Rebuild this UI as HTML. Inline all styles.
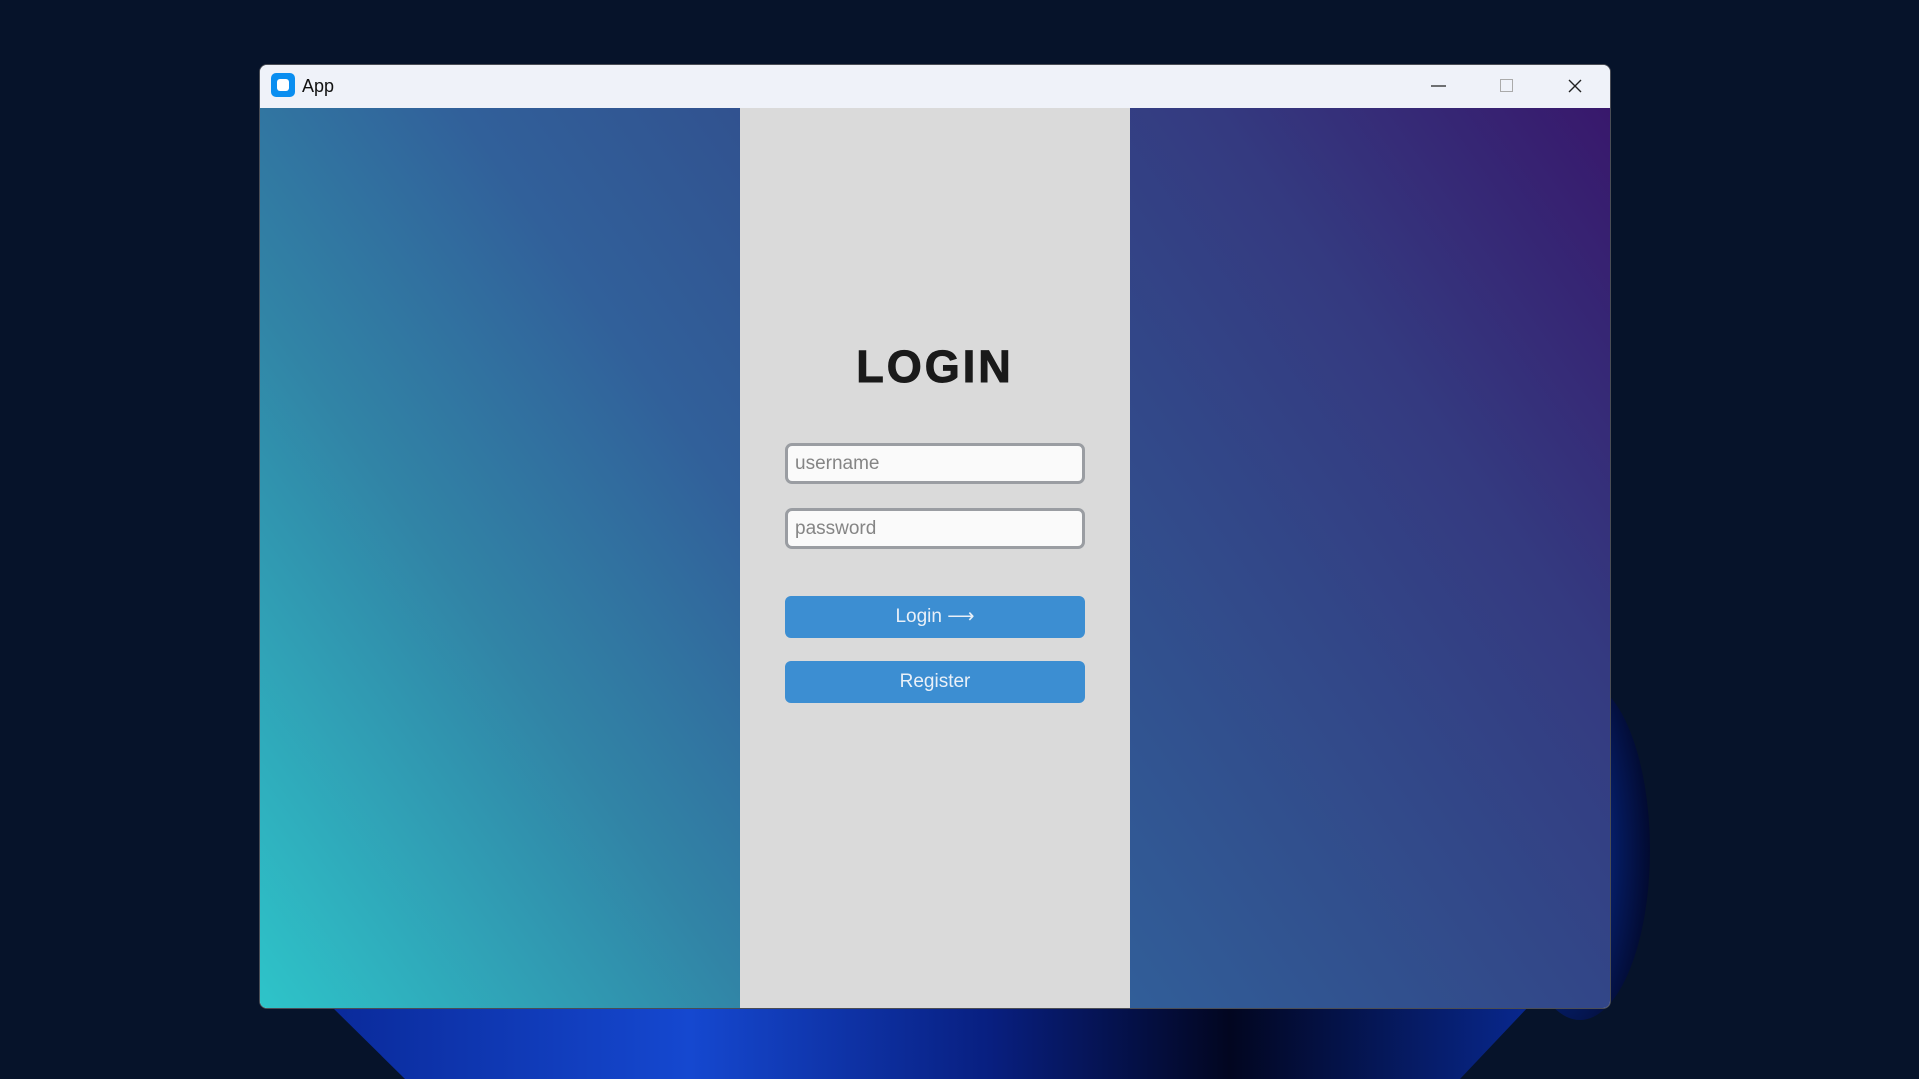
<!DOCTYPE html>
<html><head><meta charset="utf-8"><style>
*{margin:0;padding:0;box-sizing:border-box}
html,body{width:1919px;height:1079px;overflow:hidden;background:#06132a;font-family:"Liberation Sans",sans-serif}
#bg{position:absolute;left:0;top:0}
.win{position:absolute;left:259px;top:64px;width:1352px;height:945px;border-radius:8px;overflow:hidden;border:1px solid #4a4d55;background:#eff2f9}
.tb{position:absolute;left:0;top:0;width:100%;height:43px;background:#eff2f9}
.ico{position:absolute;left:11px;top:8px;width:24px;height:24px;border-radius:5px;background:#0a8ef0}
.ico:after{content:"";position:absolute;left:6px;top:6px;width:12px;height:12px;border-radius:3px;background:#fff}
.ttl{position:absolute;left:42px;top:11px;font-size:18px;color:#111}
.content{position:absolute;left:0;top:43px;width:1350px;height:901px;background:linear-gradient(55deg,#2ec4c9 0%,#3184a6 25%,#31609a 42%,#31508e 58%,#343a80 80%,#38186c 100%)}
.mid{position:absolute;left:480px;top:0;width:390px;height:100%;background:#dadada}
h1{position:absolute;left:0;width:390px;top:233px;text-align:center;font-size:45px;font-weight:900;letter-spacing:3px;color:#1a1a1a;-webkit-text-stroke:1px #1a1a1a}
.inp{position:absolute;left:45px;width:300px;height:41px;border:3px solid #9a9da2;border-radius:7px;background:#fafafa;font-size:19px;color:#858585;padding:7px 0 0 7px}
.btn{position:absolute;left:45px;width:300px;height:42px;border-radius:6px;background:#3c8ed2;color:#e9f0f8;font-size:19px;text-align:center;line-height:42px}
</style></head><body>
<svg id="bg" width="1919" height="1079">
<defs><linearGradient id="b" x1="0" y1="0" x2="1" y2="0"><stop offset="0" stop-color="#0a2a9a"/><stop offset=".3" stop-color="#1548d0"/><stop offset=".55" stop-color="#081f80"/><stop offset=".75" stop-color="#020620"/><stop offset="1" stop-color="#08288f"/></linearGradient>
<radialGradient id="r" cx=".3" cy=".5" r=".7"><stop offset="0" stop-color="#0a3ab8"/><stop offset="1" stop-color="#020a30"/></radialGradient></defs>
<polygon points="330,1005 1530,1005 1460,1079 405,1079" fill="url(#b)"/>
<ellipse cx="1580" cy="850" rx="70" ry="170" fill="url(#r)"/>
</svg>
<div class="win">
<div class="tb"><div class="ico"></div><div class="ttl">App</div>
<svg style="position:absolute;left:1160px;top:0" width="190" height="43"><path d="M11 21h15" stroke="#222" stroke-width="1.2"/><rect x="80.5" y="14.5" width="12" height="12" fill="none" stroke="#aaa"/><path d="M149 15l12 12M161 15l-12 12" stroke="#222" stroke-width="1.4"/></svg>
</div>
<div class="content"><div class="mid">
<h1>LOGIN</h1>
<div class="inp" style="top:335px">username</div>
<div class="inp" style="top:400px">password</div>
<div class="btn" style="top:488px">Login &#x27F6;</div>
<div class="btn" style="top:553px">Register</div>
</div></div>
</div>
</body></html>
